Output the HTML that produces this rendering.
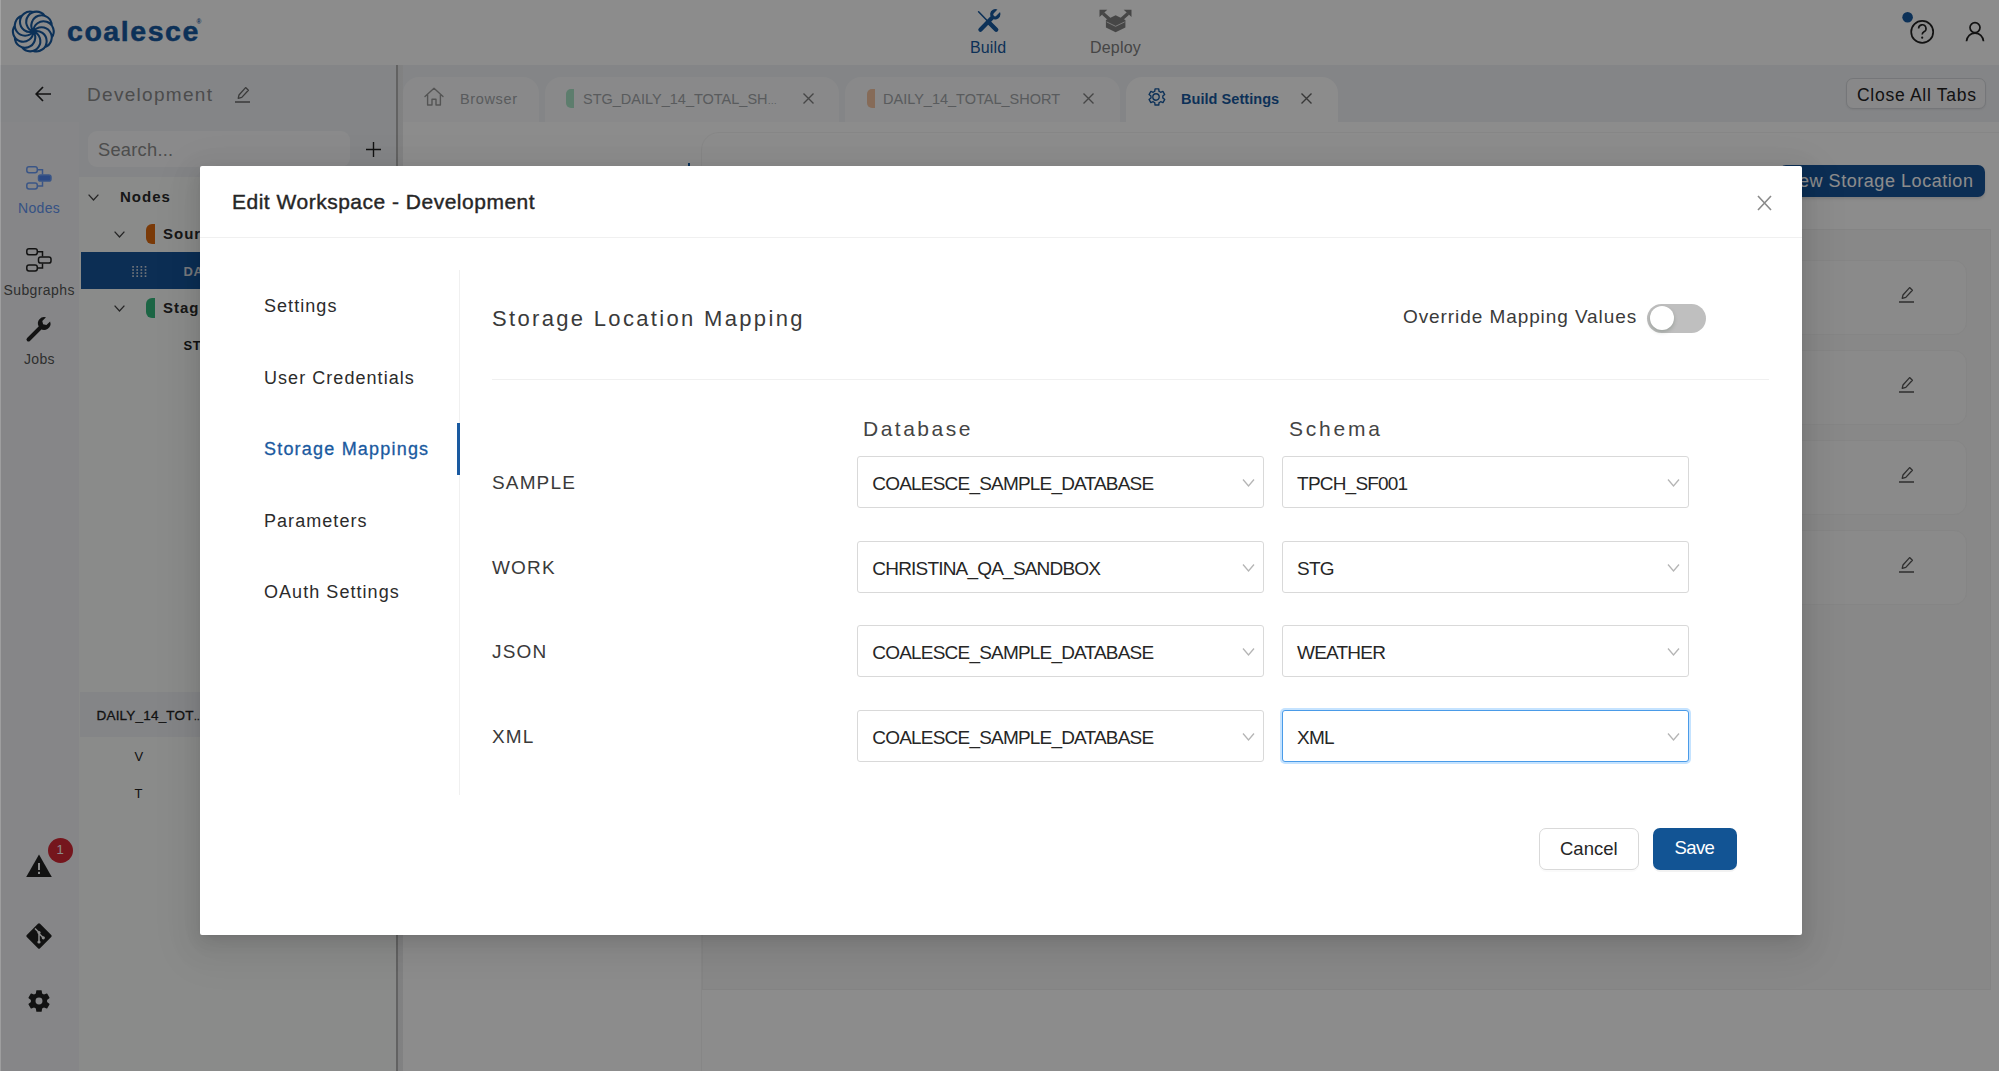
<!DOCTYPE html>
<html lang="en">
<head>
<meta charset="utf-8">
<title>Coalesce - Edit Workspace</title>
<style>
*{box-sizing:border-box;margin:0;padding:0}
html,body{width:1999px;height:1071px;overflow:hidden;background:#fff}
body{font-family:"Liberation Sans",sans-serif;color:#222;position:relative}
.abs{position:absolute}
.t{position:absolute;white-space:nowrap;line-height:1}
svg{position:absolute;overflow:visible}
/* ---------- underlying app ---------- */
#app{position:absolute;left:0;top:0;width:1999px;height:1071px;background:#fff}
#hdr{left:0;top:0;width:1999px;height:65px;background:#fff}
#bar{left:0;top:65px;width:1999px;height:57px;background:#f0f2f6}
#rail{left:0;top:122px;width:79.5px;height:949px;background:#f4f5f8;border-right:1.5px solid #cfd0d2}
#tree{left:79px;top:122px;width:318px;height:949px;background:linear-gradient(#f1f3f6 0,#f1f3f6 54.5px,#fbfdfc 54.5px)}
#vdiv{left:395.5px;top:65px;width:7px;height:1006px;background:linear-gradient(90deg,#b2b2b2 0,#b2b2b2 2.5px,#e9eaec 2.5px,#eceded 100%)}
#content{left:399px;top:122px;width:1600px;height:949px;background:#fff}
.tab{position:absolute;top:77px;height:45px;background:#f9fafb;border-radius:16px 16px 0 0}
.tab.on{background:#fff}
#mask{left:0;top:0;width:1999px;height:1071px;background:rgba(0,0,0,.45)}
/* ---------- modal ---------- */
#modal{left:200px;top:166px;width:1602px;height:769px;background:#fff;border-radius:2px;box-shadow:0 3px 6px -4px rgba(0,0,0,.12),0 6px 16px 0 rgba(0,0,0,.08),0 9px 28px 8px rgba(0,0,0,.05),0 12px 48px 16px rgba(0,0,0,.03)}
.sel{position:absolute;height:52px;width:407px;border:1px solid #d9d9d9;border-radius:3px;background:#fff}
.sel .t{left:14.5px;top:17px;font-size:19px;letter-spacing:-.8px;color:#262626}
.sel svg{right:8px;top:19px;width:13px;height:13px}
.sel.focus{border-color:#4a9be8;box-shadow:0 0 0 2px rgba(24,144,255,.25)}
.mi{position:absolute;left:64px;font-size:18px;letter-spacing:1.05px;color:#2b2b2b;white-space:nowrap;line-height:1}
.lab{position:absolute;left:292px;font-size:19px;letter-spacing:1.15px;color:#3a3a3a;white-space:nowrap;line-height:1}
</style>
</head>
<body>
<div id="app">
  <div id="hdr" class="abs"></div>
  <div id="bar" class="abs"></div>
  <div id="rail" class="abs"></div>
  <div id="tree" class="abs"></div>
  <div id="content" class="abs"></div>
  <div id="vdiv" class="abs"></div>
  <svg style="left:0;top:0;width:66px;height:65px" viewBox="0 0 66 65"><path d="M33.30 31.50A10.2 10.2 0 1 1 51.75 37.50M33.30 31.50A10.2 10.2 0 1 1 44.70 47.20M33.30 31.50A10.2 10.2 0 1 1 33.30 50.90M33.30 31.50A10.2 10.2 0 1 1 21.90 47.20M33.30 31.50A10.2 10.2 0 1 1 14.85 37.50M33.30 31.50A10.2 10.2 0 1 1 14.85 25.50M33.30 31.50A10.2 10.2 0 1 1 21.90 15.80M33.30 31.50A10.2 10.2 0 1 1 33.30 12.10M33.30 31.50A10.2 10.2 0 1 1 44.70 15.80M33.30 31.50A10.2 10.2 0 1 1 51.75 25.50" fill="none" stroke="#1759a0" stroke-width="2.1" stroke-linecap="round"/></svg>
  <div class="t" id="brand" style="left:67px;top:16.6px;font-size:28.5px;font-weight:bold;letter-spacing:1.55px;color:#1759a0;-webkit-text-stroke:.5px #1759a0">coalesce</div>
  <div class="t" style="left:196.5px;top:18.5px;font-size:6.5px;font-weight:bold;color:#1759a0">®</div>
  <svg id="ibuild" style="left:976px;top:9px;width:25px;height:24px" viewBox="0 0 25 24"><g stroke="#1759a0" fill="none" stroke-linecap="round"><path d="M2.6 2.800 L12.500 13" stroke-width="1.600"/><path d="M13.200 13.700 L20.200 20.700" stroke-width="4.400"/><path d="M4.400 20.700 L15.600 9.200" stroke-width="4.200"/></g><path d="M24.020 3.120 A5.200 5.200 0 1 1 21.480 .58 L17.810 4.240 A1.800 1.800 0 0 0 20.360 6.790 Z" fill="#1759a0"/></svg>
  <div class="t" id="tbuild" style="left:970px;top:39.8px;font-size:16px;letter-spacing:.15px;color:#1759a0">Build</div>
  <svg id="ideploy" style="left:1099px;top:9px;width:33px;height:24px" viewBox="0 0 33 24"><g fill="#808080"><path d="M16.600 6.200 L26.400 11 V18.500 L16.600 23.300 L6.900 18.500 V11z"/><path d="M.5 .8 H8.300 L.5 8z M32.500 .8 H24.700 L32.500 8z"/></g><path d="M4 4.500 L12.500 12 M29 4.500 L20.500 12" stroke="#808080" stroke-width="3.400" fill="none"/><path d="M7.600 12.900 L16.600 17.300 L25.700 12.900" stroke="#fff" stroke-opacity=".75" stroke-width="1" fill="none"/></svg>
  <div class="t" id="tdeploy" style="left:1090px;top:39.8px;font-size:16px;letter-spacing:.2px;color:#808080">Deploy</div>
  <svg id="ihelp" style="left:1900px;top:10px;width:38px;height:36px" viewBox="0 0 38 36"><circle cx="22.2" cy="21.9" r="11" fill="none" stroke="#222" stroke-width="1.7"/><circle cx="7.6" cy="7.2" r="5.3" fill="#1759a0"/><path d="M18.6 18.6a3.7 3.7 0 1 1 5.4 3.2c-1.2.7-1.8 1.3-1.8 2.8" fill="none" stroke="#222" stroke-width="1.6"/><circle cx="22.2" cy="27.7" r="1.1" fill="#222"/></svg>
  <svg id="iuser" style="left:1965px;top:21px;width:20px;height:21px" viewBox="0 0 20 21"><circle cx="10" cy="6.6" r="5" fill="none" stroke="#222" stroke-width="1.7"/><path d="M1.5 20.3c.4-5 4-8.2 8.5-8.2s8.100 3.200 8.500 8.200" fill="none" stroke="#222" stroke-width="1.7"/></svg>
  <!-- tabs -->
  <div class="tab" style="left:403px;width:136px"></div>
  <svg style="left:424px;top:87px;width:20px;height:19px" viewBox="0 0 20 19"><path d="M1 9.500 L10 1.200 L19 9.500 M3.600 7.800 V18 H8 V12.200 H12 V18 H16.400 V7.800" fill="none" stroke="#9a9a9a" stroke-width="1.4" stroke-linejoin="round" stroke-linecap="round"/></svg>
  <div class="t" style="left:460px;top:91.500px;font-size:14.5px;letter-spacing:.63px;color:#a3a6aa">Browser</div>
  <div class="tab" style="left:545px;width:294px"></div>
  <div class="abs" style="left:566px;top:88.5px;width:8px;height:19px;background:#a9e4c6;border-radius:5px 0 0 5px"></div>
  <div class="t" style="left:583px;top:91.500px;font-size:14.5px;letter-spacing:0;color:#a3a6aa">STG_DAILY_14_TOTAL_SH<span style="font-size:9.5px">…</span></div>
  <svg style="left:802.5px;top:93px;width:11px;height:11px" viewBox="0 0 11 11"><path d="M.5 .5 L10.5 10.5 M10.5 .5 L.5 10.5" stroke="#808080" stroke-width="1.4" fill="none"/></svg>
  <div class="tab" style="left:845px;width:275px"></div>
  <div class="abs" style="left:866.5px;top:88.5px;width:8px;height:19px;background:#f4c3a0;border-radius:5px 0 0 5px"></div>
  <div class="t" style="left:883px;top:91.500px;font-size:14.5px;letter-spacing:0;color:#a3a6aa">DAILY_14_TOTAL_SHORT</div>
  <svg style="left:1082.5px;top:93px;width:11px;height:11px" viewBox="0 0 11 11"><path d="M.5 .5 L10.5 10.5 M10.5 .5 L.5 10.5" stroke="#808080" stroke-width="1.4" fill="none"/></svg>
  <div class="tab on" style="left:1126px;width:212px"></div>
  <svg style="left:1144.5px;top:85.5px;width:22px;height:22px" viewBox="0 0 24 24"><path d="M12 15.500A3.500 3.500 0 1 0 12 8.500a3.500 3.500 0 0 0 0 7zM19.400 13c.04-.33.1-.66.100-1s-.06-.67-.1-1l2.100-1.650-2-3.460-2.500 1a7.300 7.300 0 0 0-1.700-1L15 3.200h-4l-.4 2.700c-.6.250-1.170.590-1.690.980l-2.490-1-2 3.460L6.500 11c-.04.330-.1.660-.1 1s.6.670.1 1l-2.100 1.650 2 3.460 2.500-1c.520.400 1.080.730 1.690.980l.4 2.700h4l.4-2.700c.610-.250 1.170-.590 1.690-.980l2.490 1 2-3.460z" fill="none" stroke="#1759a0" stroke-width="1.500" stroke-linejoin="round"/></svg>
  <div class="t" style="left:1181px;top:91.500px;font-size:14.500px;font-weight:bold;letter-spacing:.05px;color:#1759a0">Build Settings</div>
  <svg style="left:1301px;top:93px;width:11px;height:11px" viewBox="0 0 11 11"><path d="M.5 .5 L10.5 10.5 M10.5 .5 L.5 10.5" stroke="#666" stroke-width="1.4" fill="none"/></svg>
  <div class="abs" style="left:1846px;top:78px;width:140px;height:31px;border:1px solid #d6d8dc;border-radius:7px;background:#f7f8fa;box-shadow:0 1px 2px rgba(0,0,0,.06)"><div class="t" style="left:10px;top:7.500px;font-size:17.500px;letter-spacing:.72px;color:#222">Close All Tabs</div></div>
  <!-- left header -->
  <svg style="left:35px;top:86px;width:17px;height:16px" viewBox="0 0 17 16"><path d="M16 8 H1.500 M8 1 L1.200 8 L8 15" fill="none" stroke="#222" stroke-width="1.700"/></svg>
  <div class="t" id="dev" style="left:87px;top:85px;font-size:19px;letter-spacing:1.3px;color:#8a8a8a">Development</div>
  <svg style="left:234px;top:85.5px;width:17px;height:17px" viewBox="0 0 17 17"><path d="M4.2 12.4 L5 9 L11.6 1.6 L14.4 4.2 L7.8 11.4z M1 16 H16" fill="none" stroke="#6a6a6a" stroke-width="1.3" stroke-linejoin="round"/></svg>
  <!-- rail -->
  <svg style="left:26px;top:166px;width:26px;height:24px" viewBox="0 0 26 24"><g fill="none" stroke="#6b9cf5" stroke-width="1.5"><rect x=".8" y=".8" width="10.5" height="6" rx="2.2"/><rect x=".8" y="17" width="10.5" height="6" rx="2.2"/><path d="M11.300 3.800 H16.500 V8.500 M11.300 20 H16.500 V15.500"/><rect x="12.500" y="8.900" width="12.500" height="6.200" rx="2.200" fill="#4f86f0"/></g></svg>
  <div class="t" style="left:18px;top:201px;font-size:14px;letter-spacing:.35px;color:#6394f0">Nodes</div>
  <svg style="left:26px;top:248px;width:26px;height:24px" viewBox="0 0 26 24"><g fill="none" stroke="#222" stroke-width="1.5"><rect x=".8" y=".8" width="10.5" height="6" rx="2.2"/><rect x=".8" y="17" width="10.5" height="6" rx="2.2"/><path d="M11.300 3.800 H16.500 V8.500 M11.300 20 H16.500 V15.500"/><rect x="12.500" y="8.900" width="12.500" height="6.200" rx="2.200" fill="none"/></g></svg>
  <div class="t" style="left:3.5px;top:283px;font-size:14px;letter-spacing:.4px;color:#555">Subgraphs</div>
  <svg style="left:26px;top:316px;width:26px;height:26px" viewBox="0 0 26 26"><path d="M2.500 23.500 L15 11" stroke="#222" stroke-width="4" stroke-linecap="round" fill="none"/><path d="M14.200 12.400a6.300 6.300 0 0 0 9.900-7l-3.700 3.700-3.300-.8-.8-3.300 3.700-3.700a6.300 6.300 0 0 0-7.500 8.700z" fill="#222"/></svg>
  <div class="t" style="left:24px;top:351.500px;font-size:14px;letter-spacing:.3px;color:#555">Jobs</div>
  <svg style="left:26px;top:854px;width:26px;height:23px" viewBox="0 0 26 23"><path d="M13 .5 L25.800 23 H.2z" fill="#222"/><rect x="12" y="9" width="2" height="7" fill="#fff"/><rect x="12" y="17.800" width="2" height="2.200" fill="#fff"/></svg>
  <div class="abs" style="left:47.500px;top:837.500px;width:25px;height:25px;border-radius:50%;background:#d62836"><div class="t" style="left:9px;top:5.500px;font-size:13px;color:#fff">1</div></div>
  <svg style="left:25px;top:921.500px;width:28px;height:28px" viewBox="0 0 28 28"><rect x="4.600" y="4.600" width="18.800" height="18.800" rx="1.500" transform="rotate(45 14 14)" fill="#222"/><g stroke="#fff" stroke-width="1.500" fill="none"><path d="M10 6.500 L14 10.500 V20 M14 11.500 L18 15.500"/></g><circle cx="14" cy="10.500" r="1.600" fill="#fff"/><circle cx="14" cy="20" r="1.600" fill="#fff"/><circle cx="18.300" cy="15.800" r="1.600" fill="#fff"/></svg>
  <svg style="left:26px;top:987.500px;width:26px;height:26px" viewBox="0 0 24 24"><path d="M19.430 12.980c.040-.320.070-.640.070-.980s-.030-.660-.070-.980l2.110-1.650a.5.500 0 0 0 .12-.640l-2-3.460a.5.500 0 0 0-.610-.220l-2.490 1a7.300 7.300 0 0 0-1.690-.980l-.380-2.650A.49.490 0 0 0 14 2h-4a.49.490 0 0 0-.490.420l-.380 2.650c-.610.250-1.170.590-1.690.980l-2.490-1a.5.500 0 0 0-.610.220l-2 3.460a.5.500 0 0 0 .120.640l2.110 1.650c-.040.320-.070.650-.070.980s.030.660.070.980l-2.110 1.650a.5.500 0 0 0-.120.640l2 3.460c.120.220.390.300.610.220l2.490-1c.520.400 1.080.730 1.690.980l.380 2.650c.030.240.240.420.490.420h4c.250 0 .460-.180.490-.420l.380-2.650c.610-.250 1.170-.590 1.690-.980l2.490 1c.230.090.490 0 .610-.220l2-3.460a.5.500 0 0 0-.120-.640zM12 15.200a3.200 3.200 0 1 1 0-6.400 3.200 3.200 0 0 1 0 6.400z" fill="#222" fill-rule="evenodd"/></svg>
  <!-- tree -->
  <div class="abs" style="left:88px;top:131px;width:262px;height:36px;border-radius:9px;background:#fbfcfd"></div>
  <div class="t" style="left:98px;top:140.500px;font-size:18.300px;letter-spacing:.25px;color:#8c8c8c">Search...</div>
  <svg style="left:365.500px;top:142px;width:15px;height:15px" viewBox="0 0 15 15"><path d="M7.500 0 V15 M0 7.500 H15" stroke="#222" stroke-width="1.400"/></svg>
  <svg style="left:87.5px;top:193.5px;width:11px;height:7px" viewBox="0 0 11 7"><path d="M.6 .6 L5.5 6 L10.4 .6" fill="none" stroke="#444" stroke-width="1.3"/></svg>
  <div class="t" style="left:120px;top:188.500px;font-size:15px;font-weight:bold;letter-spacing:1px;color:#2a2a2a">Nodes</div>
  <svg style="left:114px;top:230.5px;width:11px;height:7px" viewBox="0 0 11 7"><path d="M.6 .6 L5.5 6 L10.4 .6" fill="none" stroke="#444" stroke-width="1.3"/></svg>
  <div class="abs" style="left:146px;top:223.500px;width:8.500px;height:20px;background:#de6a10;border-radius:6px 0 0 6px"></div>
  <div class="t" style="left:163px;top:225.500px;font-size:15px;font-weight:bold;letter-spacing:1px;color:#2a2a2a">Sour</div>
  <div class="abs" style="left:81px;top:252px;width:316px;height:36.500px;background:#17549a"></div>
  <svg style="left:131.500px;top:265.500px;width:15px;height:11px" viewBox="0 0 14 10.600" fill="#d0d6de"><rect x="0" y="0" width="1.6" height="1.600"/><rect x="0" y="3" width="1.6" height="1.600"/><rect x="0" y="6" width="1.6" height="1.600"/><rect x="0" y="9" width="1.6" height="1.600"/><rect x="4" y="0" width="1.6" height="1.600"/><rect x="4" y="3" width="1.6" height="1.600"/><rect x="4" y="6" width="1.6" height="1.600"/><rect x="4" y="9" width="1.6" height="1.600"/><rect x="8" y="0" width="1.6" height="1.600"/><rect x="8" y="3" width="1.6" height="1.600"/><rect x="8" y="6" width="1.6" height="1.600"/><rect x="8" y="9" width="1.6" height="1.600"/><rect x="12" y="0" width="1.6" height="1.600"/><rect x="12" y="3" width="1.6" height="1.600"/><rect x="12" y="6" width="1.6" height="1.600"/><rect x="12" y="9" width="1.6" height="1.600"/></svg>
  <div class="t" style="left:183.500px;top:264.500px;font-size:13px;font-weight:bold;letter-spacing:.6px;color:#d5dae0">DAILY</div>
  <svg style="left:114px;top:304.5px;width:11px;height:7px" viewBox="0 0 11 7"><path d="M.6 .6 L5.5 6 L10.4 .6" fill="none" stroke="#444" stroke-width="1.3"/></svg>
  <div class="abs" style="left:146px;top:297.500px;width:8.500px;height:20px;background:#33b97d;border-radius:6px 0 0 6px"></div>
  <div class="t" style="left:163px;top:299.500px;font-size:15px;font-weight:bold;letter-spacing:1px;color:#2a2a2a">Stag</div>
  <div class="t" style="left:183.500px;top:338.500px;font-size:13px;font-weight:bold;letter-spacing:.6px;color:#222">STG_</div>
  <div class="abs" style="left:80px;top:691.500px;width:317px;height:45.500px;background:#f1f3f6"></div>
  <div class="t" style="left:96.500px;top:709px;font-size:13.500px;letter-spacing:.2px;color:#222;-webkit-text-stroke:.3px #222">DAILY_14_TOT<span style="font-size:9px">…</span></div>
  <div class="t" style="left:134.500px;top:750px;font-size:13px;color:#222">V</div>
  <div class="t" style="left:134.500px;top:787px;font-size:13px;color:#222">T</div>
  <!-- content -->
  <div class="abs" style="left:701px;top:132px;width:1310px;height:960px;border:1px solid #f5f5f5;border-radius:18px 0 0 0"></div>
  <div class="abs" style="left:687.500px;top:162.500px;width:2.500px;height:4px;background:#1759a0"></div>
  <div class="abs" style="left:1779px;top:165px;width:205.500px;height:31.500px;background:#17549a;border-radius:7px;box-shadow:0 2px 3px rgba(0,0,0,.12)"><div class="t" style="right:11px;top:6.500px;font-size:18px;letter-spacing:.55px;color:#fff">+ New Storage Location</div></div>
  <div class="abs" style="left:702px;top:229px;width:1288.500px;height:760.500px;background:#f7f7f7;border:1px solid #f1f1f1"></div>
  <div class="abs" style="left:1500px;top:259.5px;width:467px;height:75px;background:#fbfbfb;border:1px solid #f3f3f3;border-radius:13px"></div><svg style="left:1898px;top:286px;width:17px;height:17px" viewBox="0 0 17 17"><path d="M4.2 12.4 L5 9 L11.6 1.6 L14.4 4.2 L7.8 11.4z M1 16 H16" fill="none" stroke="#555" stroke-width="1.3" stroke-linejoin="round"/></svg><div class="abs" style="left:1500px;top:349.5px;width:467px;height:75px;background:#fbfbfb;border:1px solid #f3f3f3;border-radius:13px"></div><svg style="left:1898px;top:376px;width:17px;height:17px" viewBox="0 0 17 17"><path d="M4.2 12.4 L5 9 L11.6 1.6 L14.4 4.2 L7.8 11.4z M1 16 H16" fill="none" stroke="#555" stroke-width="1.3" stroke-linejoin="round"/></svg><div class="abs" style="left:1500px;top:439.5px;width:467px;height:75px;background:#fbfbfb;border:1px solid #f3f3f3;border-radius:13px"></div><svg style="left:1898px;top:466px;width:17px;height:17px" viewBox="0 0 17 17"><path d="M4.2 12.4 L5 9 L11.6 1.6 L14.4 4.2 L7.8 11.4z M1 16 H16" fill="none" stroke="#555" stroke-width="1.3" stroke-linejoin="round"/></svg><div class="abs" style="left:1500px;top:529.5px;width:467px;height:75px;background:#fbfbfb;border:1px solid #f3f3f3;border-radius:13px"></div><svg style="left:1898px;top:556px;width:17px;height:17px" viewBox="0 0 17 17"><path d="M4.2 12.4 L5 9 L11.6 1.6 L14.4 4.2 L7.8 11.4z M1 16 H16" fill="none" stroke="#555" stroke-width="1.3" stroke-linejoin="round"/></svg>
  <!--APP-->
</div>
<div id="mask" class="abs"></div>
<div class="abs" style="left:0;top:0;width:1px;height:1071px;background:rgba(255,255,255,.2)"></div>
<div id="modal" class="abs">
  <div class="t" id="mtitle" style="left:32px;top:25px;font-size:21px;letter-spacing:.5px;color:#262626;-webkit-text-stroke:.4px #262626">Edit Workspace - Development</div>
  <svg id="mclose" style="left:1557px;top:29px;width:15px;height:16px" viewBox="0 0 15 16"><path d="M1 1 L14 15 M14 1 L1 15" stroke="#8a8a8a" stroke-width="1.6" fill="none"/></svg>
  <div class="abs" style="left:0;top:71px;width:1602px;height:1px;background:#f0f0f0"></div>
  <div class="abs" style="left:259px;top:104px;width:1px;height:525px;background:#f0f0f0"></div>
  <div class="abs" style="left:257px;top:257px;width:3px;height:52px;background:#1a5aa0"></div>
  <div class="mi" style="top:131px">Settings</div>
  <div class="mi" style="top:203px">User Credentials</div>
  <div class="mi" style="top:274px;color:#1a5aa0;letter-spacing:1.2px;-webkit-text-stroke:.3px #1a5aa0">Storage Mappings</div>
  <div class="mi" style="top:346px">Parameters</div>
  <div class="mi" style="top:417px">OAuth Settings</div>
  <div class="t" id="h1" style="left:292px;top:142px;font-size:22px;letter-spacing:2.33px;color:#3a3a3a">Storage Location Mapping</div>
  <div class="t" id="ovr" style="left:1203px;top:141px;font-size:19px;letter-spacing:.92px;color:#3a3a3a">Override Mapping Values</div>
  <div class="abs" id="tog" style="left:1447.4px;top:137.6px;width:59px;height:29px;border-radius:15px;background:#bfbfbf"><div class="abs" style="left:2.5px;top:2.5px;width:24px;height:24px;border-radius:50%;background:#fff;box-shadow:0 2px 4px rgba(0,35,11,.2)"></div></div>
  <div class="abs" style="left:292px;top:213px;width:1277px;height:1px;background:#f0f0f0"></div>
  <div class="t" id="hdb" style="left:663px;top:252px;font-size:21px;letter-spacing:2.5px;color:#444">Database</div>
  <div class="t" id="hsc" style="left:1089px;top:252px;font-size:21px;letter-spacing:2.8px;color:#444">Schema</div>
  <div class="lab" style="top:307px">SAMPLE</div>
  <div class="sel" style="left:656.8px;top:290px"><div class="t">COALESCE_SAMPLE_DATABASE</div><svg viewBox="0 0 13 13"><path d="M1 3.5 L6.5 10 L12 3.5" stroke="#b5b5b5" stroke-width="1.3" fill="none"/></svg></div>
  <div class="sel" style="left:1081.6px;width:407.4px;top:290px"><div class="t">TPCH_SF001</div><svg viewBox="0 0 13 13"><path d="M1 3.5 L6.5 10 L12 3.5" stroke="#b5b5b5" stroke-width="1.3" fill="none"/></svg></div>
  <div class="lab" style="top:391.5px">WORK</div>
  <div class="sel" style="left:656.8px;top:374.5px"><div class="t">CHRISTINA_QA_SANDBOX</div><svg viewBox="0 0 13 13"><path d="M1 3.5 L6.5 10 L12 3.5" stroke="#b5b5b5" stroke-width="1.3" fill="none"/></svg></div>
  <div class="sel" style="left:1081.6px;width:407.4px;top:374.5px"><div class="t">STG</div><svg viewBox="0 0 13 13"><path d="M1 3.5 L6.5 10 L12 3.5" stroke="#b5b5b5" stroke-width="1.3" fill="none"/></svg></div>
  <div class="lab" style="top:476px">JSON</div>
  <div class="sel" style="left:656.8px;top:459px"><div class="t">COALESCE_SAMPLE_DATABASE</div><svg viewBox="0 0 13 13"><path d="M1 3.5 L6.5 10 L12 3.5" stroke="#b5b5b5" stroke-width="1.3" fill="none"/></svg></div>
  <div class="sel" style="left:1081.6px;width:407.4px;top:459px"><div class="t">WEATHER</div><svg viewBox="0 0 13 13"><path d="M1 3.5 L6.5 10 L12 3.5" stroke="#b5b5b5" stroke-width="1.3" fill="none"/></svg></div>
  <div class="lab" style="top:561px">XML</div>
  <div class="sel" style="left:656.8px;top:544px"><div class="t">COALESCE_SAMPLE_DATABASE</div><svg viewBox="0 0 13 13"><path d="M1 3.5 L6.5 10 L12 3.5" stroke="#b5b5b5" stroke-width="1.3" fill="none"/></svg></div>
  <div class="sel focus" style="left:1081.6px;width:407.4px;top:544px"><div class="t">XML</div><svg viewBox="0 0 13 13"><path d="M1 3.5 L6.5 10 L12 3.5" stroke="#b5b5b5" stroke-width="1.3" fill="none"/></svg></div>
  <div class="abs" id="cancel" style="left:1339px;top:662px;width:100px;height:42px;border:1px solid #d9d9d9;border-radius:7px;background:#fff;box-shadow:0 2px 0 rgba(0,0,0,.02)"><div class="t" style="left:20px;top:10.500px;font-size:18.500px;color:#262626">Cancel</div></div>
  <div class="abs" id="save" style="left:1453px;top:662px;width:84px;height:42px;border-radius:7px;background:#125494;box-shadow:0 2px 0 rgba(0,0,0,.05)"><div class="t" style="left:21.500px;top:10.500px;font-size:18.500px;letter-spacing:-.6px;color:#fff">Save</div></div>
</div>
</body>
</html>
